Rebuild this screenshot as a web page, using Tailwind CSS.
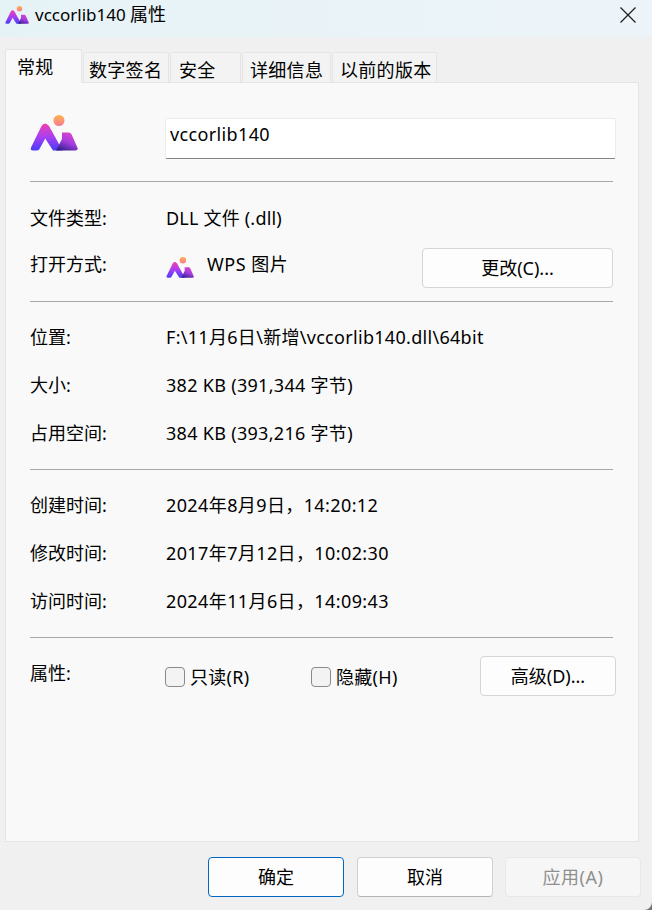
<!DOCTYPE html>
<html lang="zh-CN">
<head>
  <meta charset="UTF-8">
  <title>vccorlib140 属性</title>
  <script src="https://cdn.jsdelivr.net/npm/@tailwindcss/browser@4"></script>
</head>
<body class="w-[652px] h-[910px] overflow-hidden bg-[#6f7478] text-black text-[18px] leading-[24px] font-['Noto_Sans','Noto_Sans_CJK_SC',sans-serif]">
  <svg class="absolute w-0 h-0">
    <defs>
      <linearGradient id="peak" x1="0" y1="0" x2="0" y2="1">
        <stop offset="0" stop-color="#f23fb0"/>
        <stop offset="0.5" stop-color="#a83ff2"/>
        <stop offset="1" stop-color="#4a3cf8"/>
      </linearGradient>
      <linearGradient id="side" x1="0.75" y1="0" x2="0.25" y2="1">
        <stop offset="0" stop-color="#e044c8"/>
        <stop offset="0.5" stop-color="#a53de0"/>
        <stop offset="1" stop-color="#35208f"/>
      </linearGradient>
      <linearGradient id="sun" x1="0" y1="0" x2="0" y2="1">
        <stop offset="0" stop-color="#fdb24a"/>
        <stop offset="1" stop-color="#f9799a"/>
      </linearGradient>
      <symbol id="logo" viewBox="0 0 48 36">
        <circle cx="29" cy="5.5" r="5.5" fill="url(#sun)"/>
        <path d="M1 32.500 11.500 11q3.500-5 7.500 0l13.500 24.500h-9.500L15.200 23.500 9.500 34q-1 1.500-3 1.500H3q-3 0-2-3z" fill="url(#peak)"/>
        <path d="M32 17.500h6.500q2 0 3 1.800l6 13.500q.8 2.700-2 2.700H26l6-11.500z" fill="url(#side)"/>
      </symbol>
    </defs>
  </svg>

  <div class="w-full h-full flex flex-col bg-[#f0f0f0] rounded-br-lg overflow-hidden">
    <!-- title bar -->
    <div class="h-[37px] shrink-0 flex items-center pl-[5px] pr-[16px] pb-[8px] bg-gradient-to-r from-[#e6f3f6] to-[#edf4f9]">
      <svg class="w-[24px] h-[18px]"><use href="#logo"/></svg>
      <span class="ml-[6px] text-[17px]">vccorlib140 <span class="text-[18px]">属性</span></span>
      <svg class="ml-auto w-[16px] h-[16px] mt-[1px]" viewBox="0 0 16 16" fill="none" stroke="#1c1c1c" stroke-width="1.200"><path d="M.5.500l15 15M15.500.500l-15 15"/></svg>
    </div>

    <!-- tabs -->
    <div class="h-[45px] shrink-0 flex items-end pl-[5px] tracking-[0.3px]">
      <div class="w-[77px] h-[34px] pl-[11px] pt-[5px] bg-[#f9f9f9] border border-b-0 border-[#e5e5e5] rounded-t-[3px] relative z-10 -mb-px">常规</div>
      <div class="w-[86px] h-[30px] ml-px pl-[5px] pt-[5px] bg-[#f3f3f3] border border-b-0 border-[#e5e5e5] rounded-t-[2px]">数字签名</div>
      <div class="w-[71px] h-[30px] ml-px pl-[8px] pt-[5px] bg-[#f3f3f3] border border-b-0 border-[#e5e5e5] rounded-t-[2px]">安全</div>
      <div class="w-[89px] h-[30px] ml-px pl-[7px] pt-[5px] bg-[#f3f3f3] border border-b-0 border-[#e5e5e5] rounded-t-[2px]">详细信息</div>
      <div class="w-[105px] h-[30px] ml-px pl-[7px] pt-[5px] bg-[#f3f3f3] border border-b-0 border-[#e5e5e5] rounded-t-[2px]">以前的版本</div>
    </div>

    <!-- general page -->
    <div class="ml-[5px] w-[634px] h-[760px] shrink-0 bg-[#f9f9f9] border border-[#e5e5e5] pl-[24px] pr-[25px]">
      <div class="mt-[35px] h-[41px] flex items-center relative">
        <svg class="w-[48px] h-[36px] -mt-[12px]"><use href="#logo"/></svg>
        <div class="absolute left-[135px] -right-[3px] top-0 h-[41px] pl-[4px] pt-[3px] bg-white border border-[#ececec] border-b-[#858585] rounded-[2px] tracking-[0.36px]">vccorlib140</div>
      </div>
      <div class="mt-[22px] h-px bg-[#a8a8a8]"></div>

      <div class="mt-[24px] h-[24px] flex">
        <div class="w-[136px]">文件类型:</div>
        <div class="tracking-[0.2px]">DLL 文件 (.dll)</div>
      </div>
      <div class="mt-[18px] h-[40px] flex">
        <div class="w-[136px] -mt-[4px] pt-[8px]">打开方式:</div>
        <svg class="w-[28px] h-[21px] mt-[9px]"><use href="#logo"/></svg>
        <div class="ml-[13px] mt-[4px] tracking-[0.5px]">WPS 图片</div>
        <button class="ml-auto w-[191px] h-[40px] bg-[#fdfdfd] border border-[#d5d5d5] rounded-[4px]">更改(C)...</button>
      </div>
      <div class="mt-[13px] h-px bg-[#a8a8a8]"></div>

      <div class="mt-[23px] flex flex-col gap-[24px]">
        <div class="h-[24px] flex"><div class="w-[136px]">位置:</div><div class="tracking-[0.3px]">F:\11月6日\新增\vccorlib140.dll\64bit</div></div>
        <div class="h-[24px] flex"><div class="w-[136px]">大小:</div><div class="tracking-[0.3px]">382 KB (391,344 字节)</div></div>
        <div class="h-[24px] flex"><div class="w-[136px]">占用空间:</div><div class="tracking-[0.3px]">384 KB (393,216 字节)</div></div>
      </div>
      <div class="mt-[24px] h-px bg-[#a8a8a8]"></div>

      <div class="mt-[23px] flex flex-col gap-[24px] tracking-[0.39px]">
        <div class="h-[24px] flex"><div class="w-[136px] tracking-normal">创建时间:</div><div>2024年8月9日，14:20:12</div></div>
        <div class="h-[24px] flex"><div class="w-[136px] tracking-normal">修改时间:</div><div>2017年7月12日，10:02:30</div></div>
        <div class="h-[24px] flex"><div class="w-[136px] tracking-normal">访问时间:</div><div>2024年11月6日，14:09:43</div></div>
      </div>
      <div class="mt-[24px] h-px bg-[#a8a8a8]"></div>

      <div class="mt-[18px] h-[40px] flex -mr-[3px]">
        <div class="w-[135px] pt-[5px]">属性:</div>
        <div class="flex items-center h-[42px] w-[146px]">
          <span class="w-[20px] h-[20px] bg-[#f3f3f3] border border-[#8a8a8a] rounded-[4px]"></span>
          <span class="ml-[5px] tracking-[0.3px]">只读(R)</span>
        </div>
        <div class="flex items-center h-[42px]">
          <span class="w-[20px] h-[20px] bg-[#f3f3f3] border border-[#8a8a8a] rounded-[4px]"></span>
          <span class="ml-[5px] tracking-[0.3px]">隐藏(H)</span>
        </div>
        <button class="ml-auto w-[136px] h-[40px] bg-[#fdfdfd] border border-[#d5d5d5] rounded-[4px]">高级(D)...</button>
      </div>
    </div>

    <!-- footer buttons -->
    <div class="flex pl-[208px] pt-[15px] gap-[13px]">
      <button class="w-[136px] h-[40px] bg-[#fdfdfd] border border-[#0067c0] rounded-[4px]">确定</button>
      <button class="w-[136px] h-[40px] bg-[#fdfdfd] border border-[#d0d0d0] border-b-[#b5b5b5] rounded-[4px]">取消</button>
      <button class="w-[136px] h-[40px] -ml-px bg-[#f6f6f6] border border-[#e8e8e8] rounded-[4px] text-[#8f8f8f] tracking-[0.5px]">应用(A)</button>
    </div>
  </div>
</body>
</html>
